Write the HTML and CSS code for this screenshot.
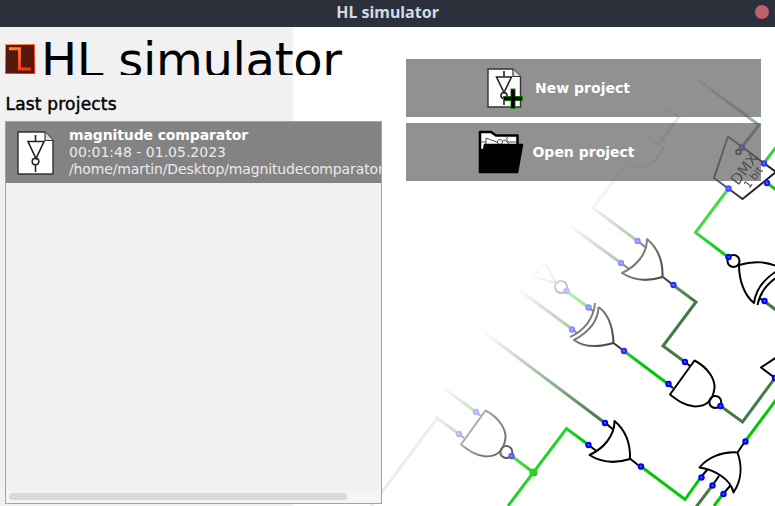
FILE: index.html
```html
<!DOCTYPE html>
<html lang="en">
<head>
<meta charset="utf-8">
<title>HL simulator</title>
<link rel="stylesheet" href="styles.css">
</head>
<body>
<div class="window">
<header class="titlebar"><span class="caption">HL simulator</span><span class="close"></span></header>
<main class="content">
<svg class="art" viewBox="0 27 775 479" aria-hidden="true">
<defs>
<linearGradient id="fade" gradientUnits="userSpaceOnUse" x1="461" y1="358" x2="578" y2="449"><stop offset="0" stop-color="#fff" stop-opacity="0"/><stop offset=".35" stop-color="#fff" stop-opacity=".33"/><stop offset="1" stop-color="#fff"/></linearGradient>
<mask id="m" maskUnits="userSpaceOnUse" x="0" y="0" width="800" height="520" style="mask-type:alpha"><rect width="800" height="520" fill="url(#fade)"/></mask>
<g id="or"><path d="M647 239C659 249 663 262 662.500 277C650 281 636 282 622 273C635 267 647 255 647 239Z"/><path d="M638 241L645 247M621 263L629 269M663 277L673 285"/></g>
<g id="nand"><path d="M485.500 410.500C500 418 506 430 505.500 438C504 450 497 456.500 486 456.500C476 456 468 450 461 444.500Z"/><path d="M476 412L481 416M459 434L464 438"/><circle cx="506.300" cy="452" r="6"/></g>
</defs>
<g mask="url(#m)">
<g class="wire on">
<path d="M511.500 456L533.500 472.500M508 506L566.500 428.500L588 444.500M566 291L588 307M624 351L668 384M641 466.500L685 499.500L701 477M745 441.500L779 396M723 494L714 506M764 163L780 142M767 183L780 192.500M728.500 188.500L695.500 232.500L728 257"/>
</g>
<g class="wire off">
<path d="M438 384L476 412M459 434L437 418L370 508M484 332L605 423M665 108L679 117L662 139M618 175L593 208L637.500 241M570 226L621 263M673 285L696 302L663 346L685 362M518 289L572 329M720.500 406L742.500 422L775 378M712 486L696 507M742 147L759 125L698 80M764 301L780 313"/>
</g>
<g class="gate">
<use href="#or"/><use href="#or" x="-32.500" y="182"/>
<use href="#nand"/><use href="#nand" x="209" y="-50"/>
<path d="M598.500 307C610 315 613 330 613.500 343C600 347 585 348 574 340C587 333 598 322 598.500 307M595 303C594 318 584 331 570 337M588 307L593 311M572 329L577 333M613.500 343L624 351"/>
<g class="faint"><path d="M545 263L534 277L556 283Z"/></g><circle cx="561" cy="287" r="6"/>
<g class="faint"><path d="M643 134L664 148C654 164 642 174 626 164M662 139L657 145M618 175L626 164"/></g>
<path d="M737.500 452.500C722 451 707 458 699.500 467.500C716 470 731 480 733.500 492.500C742 480 742 465 737.500 452.500ZM737.500 452.500L745 441.500M701 477L707 470M712 486L719 476M723 494L730 486"/>
<path d="M728 136.500L776 172L742.500 199L714 178Z"/><circle cx="738.500" cy="152" r="2.300"/>
<circle cx="733.500" cy="261" r="6"/>
<path d="M739 265C755 260 770 262 780 268M739 265C739 280 744 295 754 303C756 288 766 277 780 269M757.500 305C760 291 770 281 782 274M759 298L764 301"/>
<path d="M777 357L761 367.500L775 378"/>
</g>
<g class="tag"><text class="tag-name" transform="translate(738 186) rotate(-53)">DMX</text><text class="tag-size" transform="translate(749 189) rotate(-53)">1 bit</text></g>
<g class="pin">
<circle cx="476" cy="412" r="2.200"/><circle cx="459" cy="434" r="2.200"/><circle cx="511.500" cy="456" r="2.200"/>
<circle cx="605" cy="423" r="2.200"/><circle cx="588.500" cy="445" r="2.200"/><circle cx="641" cy="466.500" r="2.200"/>
<circle cx="637.500" cy="241" r="2.200"/><circle cx="621" cy="263" r="2.200"/><circle cx="673.500" cy="285" r="2.200"/>
<circle cx="588.500" cy="307.500" r="2.200"/><circle cx="572" cy="329.500" r="2.200"/><circle cx="624" cy="351" r="2.200"/><circle cx="566.500" cy="291" r="2.200"/>
<circle cx="685" cy="362" r="2.200"/><circle cx="668.500" cy="384" r="2.200"/><circle cx="720.500" cy="406" r="2.200"/>
<circle cx="745.500" cy="441.500" r="2.200"/><circle cx="701.500" cy="477.500" r="2.200"/><circle cx="712.500" cy="485.500" r="2.200"/><circle cx="723.500" cy="494" r="2.200"/>
<circle cx="742" cy="147.500" r="2.200"/><circle cx="764" cy="163.500" r="2.200"/><circle cx="767" cy="183" r="2.200"/><circle cx="728.500" cy="188.500" r="2.200"/>
<circle cx="728.500" cy="257" r="2.200"/><circle cx="764.500" cy="301" r="2.200"/><circle cx="775" cy="378" r="2.200"/>
<g class="faint"><circle cx="662" cy="139.500" r="2.200"/><circle cx="618" cy="175" r="2.200"/></g>
</g>
<circle class="joint" cx="533.500" cy="472.500" r="4"/>
</g>
</svg>
<section class="recent">
<div class="brand">
<svg class="logo" viewBox="0 0 30 30"><defs><linearGradient id="lg" gradientUnits="userSpaceOnUse" x1="3" y1="0" x2="20" y2="30"><stop offset="0" stop-color="#ff9838"/><stop offset="1" stop-color="#ff2412"/></linearGradient></defs><rect x=".5" y=".5" width="29" height="29" fill="#54190d" stroke="url(#lg)"/><path d="M4 4.800H14.500V25H26" fill="none" stroke="url(#lg)" stroke-width="3"/></svg>
<h1>HL simulator</h1>
</div>
<h2>Last projects</h2>
<div class="list">
<article class="project">
<svg class="doc" viewBox="0 0 37 44"><path class="paper" d="M1 1H28L36 9.500V43H1Z"/><path class="thin" d="M28 1V9.500H36"/><path class="ink" d="M18.500 4V11M11 10.500H27L19 27.500ZM18.500 34V41"/><circle class="ink" cx="18.500" cy="30.500" r="3.300"/></svg>
<div class="details"><strong>magnitude comparator</strong><span class="date">00:01:48 - 01.05.2023</span><span class="path">/home/martin/Desktop/magnitudecomparator</span></div>
</article>
<div class="scroll"><div class="thumb"></div></div>
</div>
</section>
<nav class="actions">
<button class="action new"><svg class="doc-new" viewBox="0 0 36 41"><path class="paper" d="M1 1H26L33.500 8.500V39H1Z"/><path class="thin" d="M26 1V8.500H33.500"/><path class="ink" d="M17 3V9M9.500 9H24.500L17 24.500ZM17 31V37"/><circle class="ink" cx="17" cy="27.500" r="3"/><path d="M26 20.500V41M16 30.500H36" stroke="#168b0b" stroke-width="5"/><path d="M26 21.500V40M17 30.500H35" stroke="#000" stroke-width="3.500"/></svg><span>New project</span></button>
<button class="action open"><svg class="folder" viewBox="0 0 46 44"><path d="M2 42V2H13L18 5.500H39.500V20H4Z" fill="#fff" stroke="#000" stroke-width="2.500" stroke-linejoin="round"/><path d="M3 12H8M8 15V8L21 13L27 10L32 15M29 7V12H38" fill="none" stroke="#555"/><circle cx="22" cy="12" r="2.500" fill="#fff" stroke="#555"/><path d="M6.500 14.500H44.500L39.500 42.500H2Z" stroke="#000" stroke-width="1.500" stroke-linejoin="round"/></svg><span>Open project</span></button>
</nav>
</main>
</div>
</body>
</html>
```
FILE: styles.css
```css
* { box-sizing: border-box; }
body { margin: 0; font-family: "DejaVu Sans", sans-serif; }
.window { width: 775px; height: 506px; display: flex; flex-direction: column; overflow: hidden; background: #fff; }
.titlebar { height: 27px; flex: none; display: grid; grid-template-columns: 28px 1fr 28px; background: #2b303b; align-items: center; }
.caption { grid-column: 2; text-align: center; color: #d3dae3; font: bold 16px/22px "Noto Sans", "Open Sans", sans-serif; padding-bottom: 4px; }
.close { width: 14px; height: 14px; border-radius: 50%; background: #bf616a; margin: 0 0 3px 8px; }
.content { position: relative; flex: 1; min-height: 0; display: flex; gap: 24px; background: linear-gradient(90deg, #f1f1f1 293px, #fff 293px); }
.art { position: absolute; left: 0; top: 0; width: 775px; height: 479px; }
.wire { fill: none; stroke-width: 3; }
.on { stroke: #00c900; }
.off { stroke: #447a44; }
.gate { fill: none; stroke: #000; stroke-width: 2; stroke-linejoin: round; }
.faint { opacity: .5; }
.pin { fill: #3d5bb0; stroke: #0000ff; stroke-width: 2; }
.joint { fill: #00c900; }
.tag { font-family: "DejaVu Sans", sans-serif; fill: #000; }
.tag-name { font-size: 15px; }
.tag-size { font-size: 10.500px; }
.recent { position: relative; width: 382px; flex: none; padding: 0 0 2px 5px; display: flex; flex-direction: column; }
.brand { height: 48px; flex: none; display: flex; gap: 6px; overflow: hidden; }
.logo { width: 30px; height: 30px; margin-top: 17px; flex: none; }
h1 { margin: 0; padding-top: 5px; font-size: 48px; line-height: 56px; font-weight: 400; white-space: nowrap; letter-spacing: -.3px; }
h2 { margin: 0; height: 46px; padding: 17px 0 0 .5px; font: 400 17px/24px "DejaVu Sans", sans-serif; letter-spacing: .2px; -webkit-text-stroke: .45px #000; }
.list { flex: 1; min-height: 0; border: 1px solid #86a9d3; background: #f1f1f1; display: flex; flex-direction: column; }
.project { height: 61px; background: #838383; color: #fff; display: flex; gap: 15px; padding: 5px 0 0 11px; overflow: hidden; }
.doc { width: 37px; height: 44px; margin-top: 4px; flex: none; }
.paper { fill: #fff; stroke: #333; stroke-width: 1.400; }
.thin { fill: #ddd; stroke: #333; stroke-width: 1.200; }
.ink { fill: none; stroke: #222; stroke-width: 1.600; }
.details { display: flex; flex-direction: column; white-space: nowrap; font-size: 14px; line-height: 17px; color: #ebebeb; }
.details strong { font-size: 14px; letter-spacing: -.12px; color: #fff; }
.path { letter-spacing: -.13px; }
.scroll { margin-top: auto; height: 13px; background: #f5f5f5; padding: 3px; }
.thumb { width: 338px; height: 7px; border-radius: 4px; background: #dadada; }
.actions { position: relative; width: 355px; padding-top: 32px; display: flex; flex-direction: column; gap: 6px; }
.action { width: 355px; height: 58px; border: 0; padding: 0; display: flex; align-items: center; justify-content: center; background: rgba(80, 80, 80, .63); color: #fff; font: bold 14px/18px "DejaVu Sans", sans-serif; }
.new { gap: 12px; padding-right: 50px; }
.open { gap: 8px; padding-right: 54px; }
.doc-new { width: 36px; height: 41px; }
.folder { width: 46px; height: 44px; }
```
